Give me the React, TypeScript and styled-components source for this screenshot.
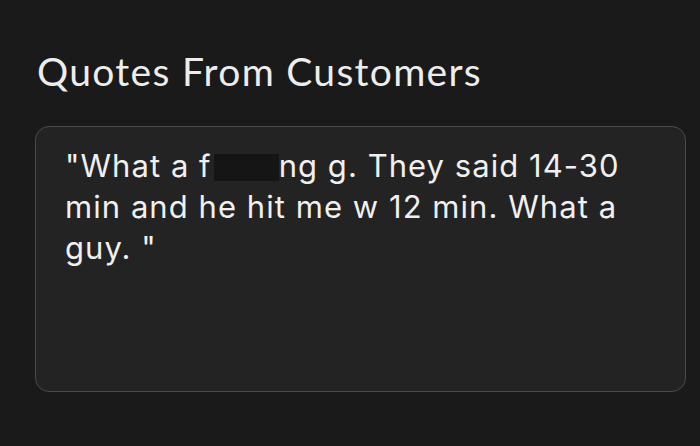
import React from "react";
import styled, { createGlobalStyle } from "styled-components";

const Global = createGlobalStyle`
  html, body { margin: 0; padding: 0; background: #1a1a1a; }
  body { width: 700px; height: 446px; overflow: hidden; }
`;

const Page = styled.div`
  width: 700px;
  height: 446px;
  box-sizing: border-box;
  background: #1a1a1a;
  padding: 49px 14px 0 35px;
  display: flex;
  flex-direction: column;
  gap: 33px;
`;

const Title = styled.h2`
  margin: 0 0 0 2px;
  font-family: Lato, "Noto Sans", sans-serif;
  font-weight: 400;
  font-size: 39px;
  line-height: 44px;
  color: #ededed;
  letter-spacing: 1.3px;
`;

const Card = styled.div`
  height: 266px;
  box-sizing: border-box;
  background: #232323;
  border: 1.5px solid #4b4b4b;
  border-radius: 14px;
  padding: 18px 20px 0 29px;
`;

const Quote = styled.p`
  margin: 0;
  font-family: Inter, Roboto, "Noto Sans", sans-serif;
  font-size: 31px;
  line-height: 41px;
  color: #f0f0f0;
  letter-spacing: 1.05px;
`;

const Redact = styled.span`
  display: inline-block;
  width: 65px;
  height: 27px;
  line-height: 27px;
  margin-left: 2px;
  vertical-align: -4px;
  background: #151515;
  color: transparent;
  overflow: hidden;
  white-space: nowrap;
  font-size: 16px;
  letter-spacing: 0;
`;

export default function App() {
  return (
    <>
      <Global />
      <Page>
        <Title>Quotes From Customers</Title>
        <Card>
          <Quote>
            "What a f<Redact>ucki</Redact>ng g. They said 14-30
            <br />
            min and he hit me w 12 min. What a
            <br />
            guy. "
          </Quote>
        </Card>
      </Page>
    </>
  );
}
